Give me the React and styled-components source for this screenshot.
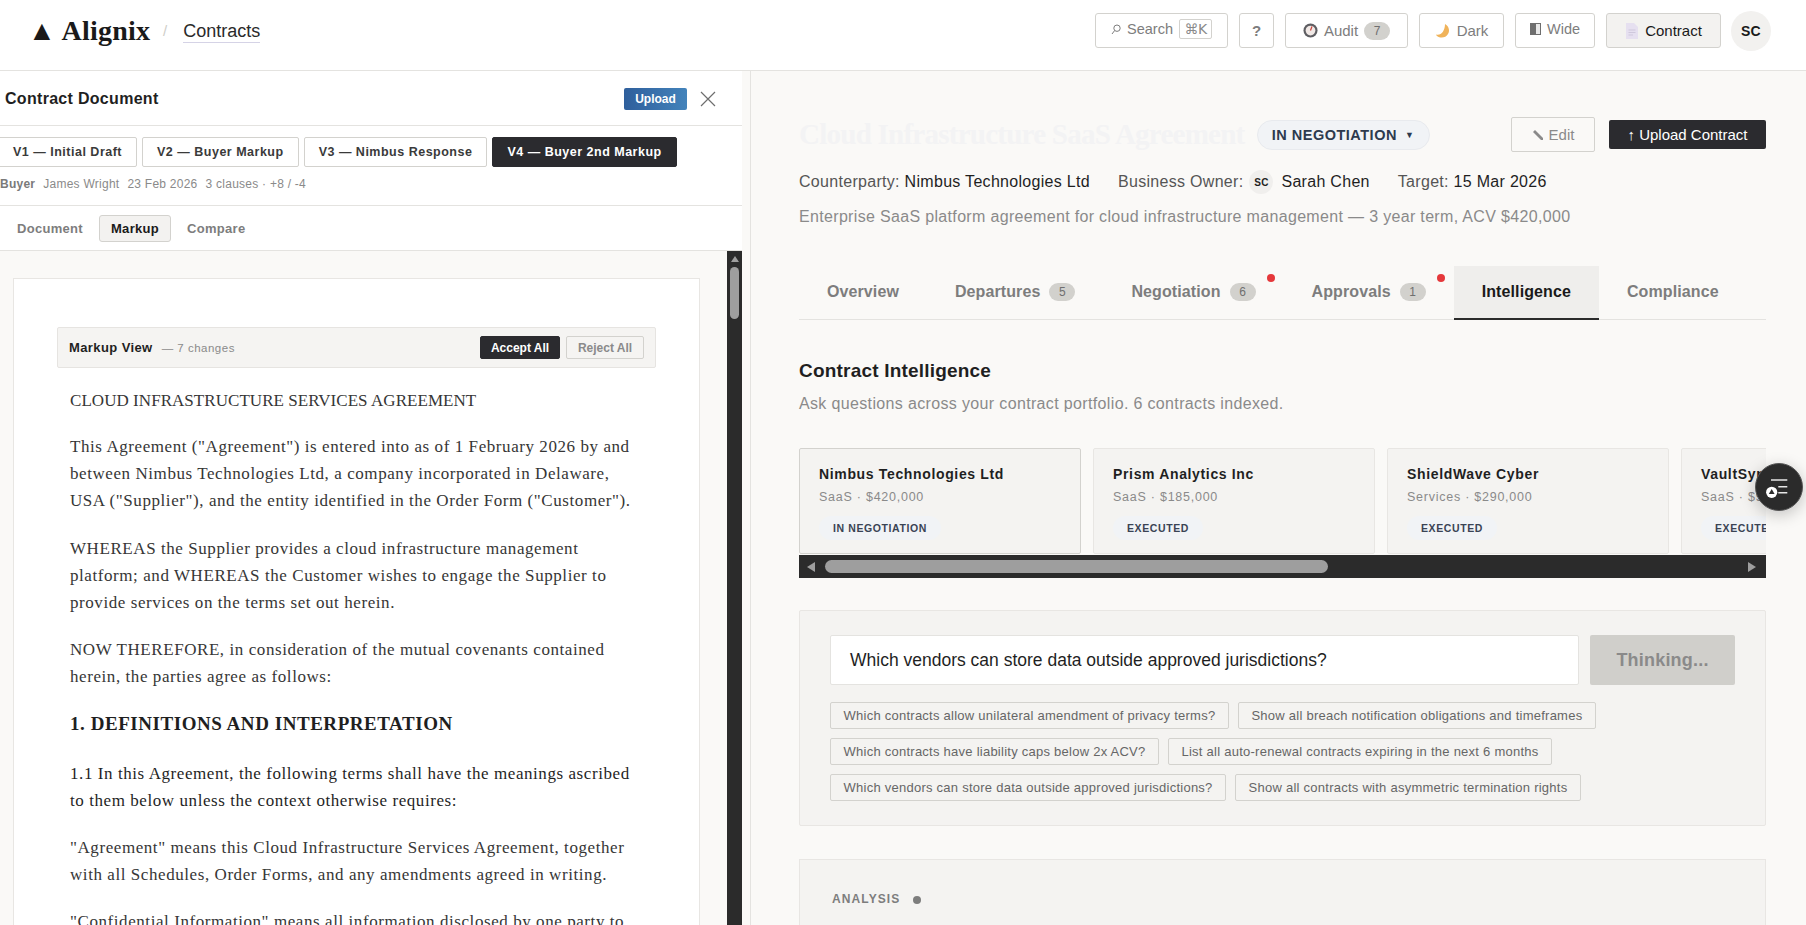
import React from "react";
import styled, { createGlobalStyle } from "styled-components";

const GlobalStyle = createGlobalStyle`
  * { box-sizing: border-box; }
  html, body { margin: 0; height: 100%; overflow: hidden; }
  body {
    background: #faf9f7;
    color: #1a1a1a;
    font-family: "Liberation Sans", Arial, sans-serif;
  }
`;

const Page = styled.div`
  height: 925px;
  display: flex;
  flex-direction: column;
  overflow: hidden;
  position: relative;
`;

const Header = styled.header`
  flex: 0 0 71px;
  display: flex;
  align-items: center;
  background: #fff;
  border-bottom: 1px solid #e4e3e0;
  padding: 0 35px 9px 28px;
`;

const Logo = styled.div`
  font-family: "Liberation Serif", serif;
  font-weight: 700;
  font-size: 28px;
  letter-spacing: 0.2px;
  color: #1a1a1a;
`;

const Slash = styled.span`
  color: #cfcec9;
  margin: 0 16px 0 13px;
  font-size: 15px;
`;

const Crumb = styled.span`
  font-size: 18px;
  color: #2a2a2a;
  border-bottom: 1px solid #d5d3e6;
  line-height: 22px;
  margin-top: 1px;
`;

const HeaderActions = styled.div`
  margin-left: auto;
  display: flex;
  align-items: center;
  gap: 11px;
`;

const HeaderButton = styled.button`
  height: 35px;
  width: ${(p) => p.$w}px;
  display: inline-flex;
  align-items: center;
  justify-content: center;
  gap: 6px;
  padding: 0 0 ${(p) => (p.$raised ? 3 : 0)}px;
  background: ${(p) => (p.$active ? "#f3f2f0" : "#fff")};
  border: 1px solid #d3d2ce;
  border-radius: 3px;
  color: ${(p) => (p.$active ? "#1a1a1a" : "#7d7d7d")};
  font: 400 ${(p) => (p.$raised ? 14.5 : 15)}px "Liberation Sans", sans-serif;
`;

const Kbd = styled.span`
  font: 400 14px "DejaVu Sans", sans-serif;
  color: #8a8a8a;
  border: 1px solid #d3d2ce;
  border-radius: 2px;
  padding: 0 3px;
  height: 20px;
  width: 33px;
  line-height: 18px;
  letter-spacing: -0.5px;
  white-space: nowrap;
`;

const Count = styled.span`
  background: #d2d1cd;
  color: #6f6f6f;
  border-radius: 9px;
  font-size: 12px;
  min-width: 26px;
  height: 18px;
  line-height: 18px;
  text-align: center;
  font-weight: 400;
`;

const Avatar = styled.div`
  width: 40px;
  height: 40px;
  margin-left: -1px;
  border-radius: 50%;
  background: #f2f1ef;
  display: flex;
  align-items: center;
  justify-content: center;
  font-weight: 700;
  font-size: 14px;
  letter-spacing: 0.4px;
  color: #1a1a1a;
`;

const Main = styled.main`
  flex: 1;
  display: flex;
  min-height: 0;
`;

const LeftPane = styled.section`
  flex: 0 0 742px;
  display: flex;
  flex-direction: column;
  background: #fff;
  min-height: 0;
`;

const Divider = styled.div`
  flex: 0 0 9px;
  background: #faf9f7;
  border-right: 1px solid #e4e3e0;
`;

const DocHeader = styled.div`
  flex: 0 0 55px;
  display: flex;
  align-items: center;
  padding: 1px 26px 0 5px;
  border-bottom: 1px solid #e4e3e0;
`;

const DocTitle = styled.h2`
  margin: 0;
  font-size: 16px;
  font-weight: 700;
  letter-spacing: 0.3px;
  color: #1f1f1f;
`;

const UploadSmall = styled.button`
  margin-left: auto;
  width: 63px;
  height: 22px;
  border: 0;
  border-radius: 2px;
  background: linear-gradient(90deg, #2f5f9c, #4383bb);
  color: #fff;
  font: 700 12px "Liberation Sans", sans-serif;
`;

const CloseIcon = styled.svg`
  width: 16px;
  height: 16px;
  margin-left: 13px;
  stroke: #6e6e6e;
  stroke-width: 1.2;
`;

const Versions = styled.div`
  flex: 0 0 80px;
  padding: 11px 0 0 0;
  border-bottom: 1px solid #e4e3e0;
`;

const VersionRow = styled.div`
  display: flex;
  gap: 5px;
  margin-left: -2px;
`;

const VersionTab = styled.button`
  height: 30px;
  padding: 0 14px;
  background: ${(p) => (p.$active ? "#2b2b2f" : "#fff")};
  color: ${(p) => (p.$active ? "#fff" : "#3a3a3a")};
  border: 1px solid ${(p) => (p.$active ? "#2b2b2f" : "#d3d2ce")};
  border-radius: 2px;
  font: 700 12.5px "Liberation Sans", sans-serif;
  letter-spacing: 0.5px;
  white-space: nowrap;
`;

const VersionMeta = styled.div`
  display: flex;
  gap: 8px;
  margin-top: 10px;
  font-size: 12px;
  line-height: 14px;
  letter-spacing: 0.25px;
  color: #8a8a8a;
`;

const MetaStrong = styled.span`
  font-weight: 700;
  color: #7a7a7a;
`;

const ViewTabs = styled.div`
  flex: 0 0 45px;
  display: flex;
  align-items: center;
  gap: 16px;
  padding: 0 0 0 17px;
  border-bottom: 1px solid #e4e3e0;
`;

const ViewTab = styled.span`
  font-size: 13px;
  letter-spacing: 0.3px;
  font-weight: 700;
  color: ${(p) => (p.$active ? "#1a1a1a" : "#7d7d7d")};
  ${(p) =>
    p.$active &&
    `
    background: #f3f2f0;
    border: 1px solid #d3d2ce;
    border-radius: 3px;
    padding: 5px 11px;
  `}
`;

const DocBody = styled.div`
  flex: 1;
  display: flex;
  min-height: 0;
  background: #faf9f7;
`;

const DocScroll = styled.div`
  flex: 1;
  overflow: hidden;
  padding: 27px 27px 0 13px;
`;

const Paper = styled.article`
  background: #fff;
  border: 1px solid #e8e6e3;
  padding: 48px 43px 0;
  height: 800px;
`;

const MarkupBar = styled.div`
  height: 41px;
  display: flex;
  align-items: center;
  padding: 0 11px 0 11px;
  background: #f5f4f2;
  border: 1px solid #e6e4e1;
  border-radius: 2px;
`;

const MarkupTitle = styled.strong`
  font-size: 13px;
  letter-spacing: 0.4px;
  color: #1f1f1f;
`;

const MarkupCount = styled.span`
  font-size: 11.5px;
  letter-spacing: 0.5px;
  color: #8a8a8a;
  margin-left: 9px;
`;

const BarButton = styled.button`
  width: ${(p) => p.$w}px;
  height: 23px;
  margin-left: ${(p) => p.$ml};
  background: ${(p) => (p.$solid ? "#2b2b2f" : "#f5f4f2")};
  color: ${(p) => (p.$solid ? "#fff" : "#8a8a8a")};
  border: 1px solid ${(p) => (p.$solid ? "#2b2b2f" : "#d3d2ce")};
  border-radius: 2px;
  font: 700 12px "Liberation Sans", sans-serif;
  padding: 0;
`;

const DocText = styled.div`
  margin-top: 19px;
  padding-left: 13px;
  font-family: "Liberation Serif", serif;
  font-size: 17px;
  line-height: 27.2px;
  letter-spacing: 0.57px;
  color: #363636;
  white-space: nowrap;
`;

const DocPara = styled.p`
  margin: 0 0 20px;
  color: ${(p) => (p.$dark ? "#1f1f1f" : "#363636")};
`;

const DocCaption = styled.p`
  margin: 0 0 18.8px;
  letter-spacing: 0.05px;
`;

const DocHeading = styled.h3`
  margin: -1px 0 22px;
  font-size: 19px;
  line-height: 28px;
  letter-spacing: 0.55px;
  color: #1f1f1f;
`;

const VTrack = styled.div`
  flex: 0 0 15px;
  background: #2b2b2b;
  display: flex;
  flex-direction: column;
  align-items: center;
  padding-top: 5px;
`;

const VThumb = styled.div`
  width: 9px;
  height: 52px;
  border-radius: 5px;
  background: #9e9e9e;
  margin-top: 5px;
`;

const ArrowUp = styled.div`
  width: 0;
  height: 0;
  border-left: 4px solid transparent;
  border-right: 4px solid transparent;
  border-bottom: 6px solid #9e9e9e;
`;

const RightPane = styled.section`
  flex: 1;
  min-width: 0;
  padding: 46px 40px 0 48px;
  overflow: hidden;
  background: #faf9f7;
`;

const TitleRow = styled.div`
  display: flex;
  align-items: center;
  height: 35px;
`;

const Title = styled.h1`
  margin: 0;
  font: 700 29px "Liberation Serif", serif;
  letter-spacing: -0.75px;
  color: #f3f3f4;
  white-space: nowrap;
`;

const StatusPill = styled.div`
  margin-left: 12px;
  height: 30px;
  width: 173px;
  display: flex;
  align-items: center;
  justify-content: center;
  gap: 8px;
  background: #f1f3f6;
  border: 1px solid #e8eaee;
  border-radius: 15px;
  color: #2d3a4e;
  font-size: 14.5px;
  font-weight: 700;
  letter-spacing: 0.5px;
  white-space: nowrap;
`;

const Caret = styled.span`
  font-size: 9px;
`;

const EditButton = styled.button`
  margin-left: auto;
  width: 84px;
  height: 35px;
  background: #faf9f7;
  border: 1px solid #d3d2ce;
  border-radius: 2px;
  color: #8a8a8a;
  font: 400 15px "Liberation Sans", sans-serif;
  display: flex;
  align-items: center;
  justify-content: center;
  gap: 5px;
`;

const UploadButton = styled.button`
  margin-left: 14px;
  width: 157px;
  height: 29px;
  padding: 0;
  background: #2b2b2f;
  border: 0;
  border-radius: 2px;
  color: #fff;
  font: 400 15px "Liberation Sans", sans-serif;
`;

const MetaRow = styled.div`
  display: flex;
  align-items: center;
  margin-top: 18px;
  height: 24px;
  font-size: 16px;
  letter-spacing: 0.3px;
  color: #1f1f1f;
`;

const MetaItem = styled.div`
  display: flex;
  align-items: center;
  margin-right: 28px;
  white-space: pre;
`;

const MetaLabel = styled.span`
  color: #555;
`;

const OwnerDot = styled.span`
  width: 24px;
  height: 24px;
  margin: 0 8px 0 6px;
  border-radius: 50%;
  background: #f0efed;
  font-size: 10px;
  font-weight: 700;
  display: flex;
  align-items: center;
  justify-content: center;
`;

const Description = styled.p`
  margin: 12px 0 0;
  font-size: 16px;
  line-height: 22px;
  letter-spacing: 0.33px;
  color: #8a8a8a;
  white-space: nowrap;
`;

const Tabs = styled.nav`
  margin-top: 38px;
  height: 54px;
  display: flex;
  border-bottom: 1px solid #e4e3e0;
`;

const Tab = styled.div`
  position: relative;
  height: 54px;
  padding: 0 28px;
  display: flex;
  align-items: center;
  gap: 9px;
  font-size: 16px;
  font-weight: 700;
  letter-spacing: 0.1px;
  color: ${(p) => (p.$active ? "#1a1a1a" : "#7d7d7d")};
  background: ${(p) => (p.$active ? "#efeeec" : "transparent")};
  border-bottom: 2px solid ${(p) => (p.$active ? "#2b2b2b" : "transparent")};
`;

const RedDot = styled.span`
  position: absolute;
  width: 8px;
  height: 8px;
  right: 9px;
  top: 8px;
  border-radius: 50%;
  background: #e5383b;
`;

const SectionTitle = styled.h2`
  margin: 40px 0 0;
  font-size: 19px;
  line-height: 22px;
  font-weight: 700;
  letter-spacing: 0.2px;
  color: #1f1f1f;
`;

const SectionSub = styled.p`
  margin: 12px 0 0;
  font-size: 16px;
  line-height: 20px;
  letter-spacing: 0.35px;
  color: #8a8a8a;
`;

const CardStrip = styled.div`
  margin-top: 34px;
  display: flex;
  gap: 12px;
  overflow: hidden;
  height: 106px;
`;

const ContractCard = styled.div`
  flex: 0 0 282px;
  padding: 16px 19px 0;
  background: #f4f3f1;
  border: 1px solid ${(p) => (p.$active ? "#d3d2ce" : "#e8e6e3")};
  border-radius: 2px;
`;

const CardName = styled.div`
  font-size: 14px;
  line-height: 18px;
  font-weight: 700;
  letter-spacing: 0.65px;
  color: #1f1f1f;
  white-space: nowrap;
`;

const CardInfo = styled.div`
  margin-top: 6px;
  font-size: 12.5px;
  line-height: 16px;
  letter-spacing: 0.75px;
  color: #8a8a8a;
  white-space: nowrap;
`;

const CardStatus = styled.span`
  display: inline-block;
  margin-top: 11px;
  padding: 0 14px;
  height: 24px;
  line-height: 24px;
  border-radius: 12px;
  background: #f1f3f6;
  color: #3a4354;
  font-size: 10.5px;
  font-weight: 700;
  letter-spacing: 0.6px;
  white-space: nowrap;
`;

const HTrack = styled.div`
  margin-top: 1px;
  height: 23px;
  background: #2b2b2b;
  display: flex;
  align-items: center;
  padding: 0 10px 0 8px;
`;

const HThumb = styled.div`
  width: 503px;
  height: 13px;
  margin-left: 10px;
  border-radius: 7px;
  background: #9e9e9e;
`;

const ArrowSide = styled.div`
  width: 0;
  height: 0;
  border-top: 5px solid transparent;
  border-bottom: 5px solid transparent;
  ${(p) =>
    p.$right
      ? "border-left: 8px solid #9e9e9e; margin-left: auto;"
      : "border-right: 8px solid #9e9e9e;"}
`;

const AskPanel = styled.div`
  margin-top: 32px;
  height: 216px;
  padding: 24px 30px 0;
  background: #f4f3f1;
  border: 1px solid #e8e6e3;
  border-radius: 2px;
`;

const AskRow = styled.div`
  display: flex;
  gap: 11px;
`;

const AskInput = styled.div`
  flex: 1;
  height: 50px;
  padding: 0 19px;
  display: flex;
  align-items: center;
  background: #fff;
  border: 1px solid #e4e3e0;
  border-radius: 2px;
  font-size: 17.5px;
  color: #1f1f1f;
`;

const ThinkingButton = styled.button`
  flex: 0 0 145px;
  height: 50px;
  background: #d0cfcb;
  border: 0;
  border-radius: 2px;
  color: #8a8a8a;
  font: 700 18px "Liberation Sans", sans-serif;
  letter-spacing: 0.2px;
`;

const Chips = styled.div`
  margin-top: 17px;
  display: flex;
  flex-wrap: wrap;
  gap: 9px;
`;

const Chip = styled.span`
  height: 27px;
  line-height: 25px;
  padding: 0 12.5px;
  background: #f4f3f1;
  border: 1px solid #d3d2ce;
  border-radius: 2px;
  font-size: 13px;
  letter-spacing: 0.25px;
  color: #666;
  white-space: nowrap;
`;

const AnalysisPanel = styled.div`
  margin-top: 33px;
  height: 200px;
  padding: 30px 32px;
  background: #f4f3f1;
  border: 1px solid #e8e6e3;
  display: flex;
  align-items: flex-start;
  gap: 13px;
`;

const AnalysisLabel = styled.span`
  font-size: 12px;
  line-height: 18px;
  font-weight: 700;
  letter-spacing: 1.1px;
  color: #7d7d7d;
`;

const AnalysisDot = styled.span`
  width: 8px;
  height: 8px;
  margin-top: 6px;
  border-radius: 50%;
  background: #7d7d7d;
`;

const Fab = styled.button`
  position: absolute;
  left: 1755px;
  top: 463px;
  width: 48px;
  height: 48px;
  padding: 0;
  border-radius: 50%;
  background: #2b2b2b;
  border: 1px solid #555;
  box-shadow: 0 4px 16px rgba(0, 0, 0, 0.22);
  display: flex;
  align-items: center;
  justify-content: center;
`;

const IconGlyph = styled.svg`
  flex: none;
`;

const SearchIcon = () => (
  <IconGlyph width="10" height="11" viewBox="0 0 10 11">
    <circle cx="6" cy="4.2" r="3.2" fill="none" stroke="#7d7d7d" strokeWidth="1" />
    <path d="M3.6 6.6 L1 10" stroke="#7d7d7d" strokeWidth="1" />
  </IconGlyph>
);

const Stopwatch = () => (
  <IconGlyph width="15" height="15" viewBox="0 0 16 16">
    <circle cx="8" cy="8" r="7.5" fill="#5e5e62" />
    <circle cx="8" cy="8" r="5.2" fill="#f1e9e6" />
    <path d="M8 8 L9.6 3.6" stroke="#c9443c" strokeWidth="1.3" />
  </IconGlyph>
);

const Moon = () => (
  <IconGlyph width="16" height="16" viewBox="0 0 16 16">
    <path d="M10 1 C14 3 15 8 13 11 C11 14.5 6 16 2 13 C1.5 12.5 1 12 1 11.5 C6 13 10 8 10 1Z" fill="#f0b35a" />
  </IconGlyph>
);

const PaperIcon = () => (
  <IconGlyph width="14" height="16" viewBox="0 0 14 16">
    <path d="M1 0 H9 L13 4 V16 H1Z" fill="#e6e0f0" />
    <path d="M3.5 7 H10.5 M3.5 9.5 H10.5 M3.5 12 H8" stroke="#cfc8dc" strokeWidth="1" />
  </IconGlyph>
);

const WideIcon = () => (
  <IconGlyph width="11" height="12" viewBox="0 0 11 12">
    <rect x="0.5" y="0.5" width="10" height="11" fill="#e8e8e8" stroke="#6e6e6e" />
    <rect x="1" y="1" width="5" height="10" fill="#6e6e6e" />
  </IconGlyph>
);

const PencilIcon = () => (
  <IconGlyph width="12" height="12" viewBox="0 0 12 12">
    <path d="M3 1 L11 9 L11 11 L9 11 L1 3Z" fill="#8a8a8a" />
  </IconGlyph>
);

const FabIcon = () => (
  <svg width="28" height="24" viewBox="0 0 28 24">
    <path d="M6 5 H22.3 M13.3 11.7 H22.3 M13.3 17.7 H22.3" stroke="#e6e6e6" strokeWidth="1.4" />
    <circle cx="6.7" cy="17.3" r="5.6" fill="#fff" />
    <path d="M6.7 14 L9.6 19 H3.8Z" fill="#2b2b2b" />
  </svg>
);

const contracts = [
  { name: "Nimbus Technologies Ltd", info: "SaaS · $420,000", status: "IN NEGOTIATION", active: true },
  { name: "Prism Analytics Inc", info: "SaaS · $185,000", status: "EXECUTED" },
  { name: "ShieldWave Cyber", info: "Services · $290,000", status: "EXECUTED" },
  { name: "VaultSync Systems", info: "SaaS · $510,000", status: "EXECUTED" },
];

const questions = [
  "Which contracts allow unilateral amendment of privacy terms?",
  "Show all breach notification obligations and timeframes",
  "Which contracts have liability caps below 2x ACV?",
  "List all auto-renewal contracts expiring in the next 6 months",
  "Which vendors can store data outside approved jurisdictions?",
  "Show all contracts with asymmetric termination rights",
];

export default function App() {
  return (
    <Page>
      <GlobalStyle />
      <Header>
        <Logo>▲ Alignix</Logo>
        <Slash>/</Slash>
        <Crumb>Contracts</Crumb>
        <HeaderActions>
          <HeaderButton $w={133} $raised>
            <SearchIcon /> Search <Kbd>⌘K</Kbd>
          </HeaderButton>
          <HeaderButton $w={35}>
            <strong>?</strong>
          </HeaderButton>
          <HeaderButton $w={123}>
            <Stopwatch /> Audit <Count>7</Count>
          </HeaderButton>
          <HeaderButton $w={85}>
            <Moon /> Dark
          </HeaderButton>
          <HeaderButton $w={80} $raised>
            <WideIcon /> Wide
          </HeaderButton>
          <HeaderButton $w={115} $active>
            <PaperIcon /> Contract
          </HeaderButton>
          <Avatar>SC</Avatar>
        </HeaderActions>
      </Header>
      <Main>
        <LeftPane>
          <DocHeader>
            <DocTitle>Contract Document</DocTitle>
            <UploadSmall>Upload</UploadSmall>
            <CloseIcon viewBox="0 0 16 16">
              <path d="M1 1 L15 15 M15 1 L1 15" />
            </CloseIcon>
          </DocHeader>
          <Versions>
            <VersionRow>
              <VersionTab>V1 — Initial Draft</VersionTab>
              <VersionTab>V2 — Buyer Markup</VersionTab>
              <VersionTab>V3 — Nimbus Response</VersionTab>
              <VersionTab $active>V4 — Buyer 2nd Markup</VersionTab>
            </VersionRow>
            <VersionMeta>
              <MetaStrong>Buyer</MetaStrong>
              <span>James Wright</span>
              <span>23 Feb 2026</span>
              <span>3 clauses · +8 / -4</span>
            </VersionMeta>
          </Versions>
          <ViewTabs>
            <ViewTab>Document</ViewTab>
            <ViewTab $active>Markup</ViewTab>
            <ViewTab>Compare</ViewTab>
          </ViewTabs>
          <DocBody>
            <DocScroll>
              <Paper>
                <MarkupBar>
                  <MarkupTitle>Markup View</MarkupTitle>
                  <MarkupCount>— 7 changes</MarkupCount>
                  <BarButton $solid $w={80} $ml="auto">
                    Accept All
                  </BarButton>
                  <BarButton $w={78} $ml="6px">
                    Reject All
                  </BarButton>
                </MarkupBar>
                <DocText>
                  <DocCaption>CLOUD INFRASTRUCTURE SERVICES AGREEMENT</DocCaption>
                  <DocPara>
                    This Agreement ("Agreement") is entered into as of 1 February 2026 by and
                    <br />
                    between Nimbus Technologies Ltd, a company incorporated in Delaware,
                    <br />
                    USA ("Supplier"), and the entity identified in the Order Form ("Customer").
                  </DocPara>
                  <DocPara>
                    WHEREAS the Supplier provides a cloud infrastructure management
                    <br />
                    platform; and WHEREAS the Customer wishes to engage the Supplier to
                    <br />
                    provide services on the terms set out herein.
                  </DocPara>
                  <DocPara>
                    NOW THEREFORE, in consideration of the mutual covenants contained
                    <br />
                    herein, the parties agree as follows:
                  </DocPara>
                  <DocHeading>1. DEFINITIONS AND INTERPRETATION</DocHeading>
                  <DocPara $dark>
                    1.1 In this Agreement, the following terms shall have the meanings ascribed
                    <br />
                    to them below unless the context otherwise requires:
                  </DocPara>
                  <DocPara>
                    "Agreement" means this Cloud Infrastructure Services Agreement, together
                    <br />
                    with all Schedules, Order Forms, and any amendments agreed in writing.
                  </DocPara>
                  <DocPara>
                    "Confidential Information" means all information disclosed by one party to
                  </DocPara>
                </DocText>
              </Paper>
            </DocScroll>
            <VTrack>
              <ArrowUp />
              <VThumb />
            </VTrack>
          </DocBody>
        </LeftPane>
        <Divider />
        <RightPane>
          <TitleRow>
            <Title>Cloud Infrastructure SaaS Agreement</Title>
            <StatusPill>
              IN NEGOTIATION <Caret>▼</Caret>
            </StatusPill>
            <EditButton>
              <PencilIcon /> Edit
            </EditButton>
            <UploadButton>↑ Upload Contract</UploadButton>
          </TitleRow>
          <MetaRow>
            <MetaItem>
              <MetaLabel>Counterparty: </MetaLabel>Nimbus Technologies Ltd
            </MetaItem>
            <MetaItem>
              <MetaLabel>Business Owner:</MetaLabel>
              <OwnerDot>SC</OwnerDot>Sarah Chen
            </MetaItem>
            <MetaItem>
              <MetaLabel>Target: </MetaLabel>15 Mar 2026
            </MetaItem>
          </MetaRow>
          <Description>
            Enterprise SaaS platform agreement for cloud infrastructure management — 3 year term, ACV $420,000
          </Description>
          <Tabs>
            <Tab>Overview</Tab>
            <Tab>
              Departures <Count>5</Count>
            </Tab>
            <Tab>
              Negotiation <Count>6</Count>
              <RedDot />
            </Tab>
            <Tab>
              Approvals <Count>1</Count>
              <RedDot />
            </Tab>
            <Tab $active>Intelligence</Tab>
            <Tab>Compliance</Tab>
          </Tabs>
          <SectionTitle>Contract Intelligence</SectionTitle>
          <SectionSub>Ask questions across your contract portfolio. 6 contracts indexed.</SectionSub>
          <CardStrip>
            {contracts.map((c) => (
              <ContractCard key={c.name} $active={c.active}>
                <CardName>{c.name}</CardName>
                <CardInfo>{c.info}</CardInfo>
                <CardStatus>{c.status}</CardStatus>
              </ContractCard>
            ))}
          </CardStrip>
          <HTrack>
            <ArrowSide />
            <HThumb />
            <ArrowSide $right />
          </HTrack>
          <AskPanel>
            <AskRow>
              <AskInput>Which vendors can store data outside approved jurisdictions?</AskInput>
              <ThinkingButton>Thinking...</ThinkingButton>
            </AskRow>
            <Chips>
              {questions.map((q) => (
                <Chip key={q}>{q}</Chip>
              ))}
            </Chips>
          </AskPanel>
          <AnalysisPanel>
            <AnalysisLabel>ANALYSIS</AnalysisLabel>
            <AnalysisDot />
          </AnalysisPanel>
        </RightPane>
      </Main>
      <Fab>
        <FabIcon />
      </Fab>
    </Page>
  );
}
